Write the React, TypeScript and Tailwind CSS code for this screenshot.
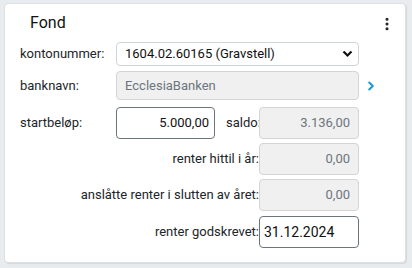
import { ChevronRight, EllipsisVertical } from "lucide-react"

const font = { fontFamily: "Roboto, 'Liberation Sans', sans-serif" }

function ReadOnly({ value, className = "" }: { value: string; className?: string }) {
  return (
    <div
      className={`flex items-center justify-end rounded-[4px] border border-[#d4d4d4] bg-[#f0f0f0] px-2 text-[13px] text-[#6c757d] ${className}`}
    >
      {value}
    </div>
  )
}

export default function App() {
  return (
    <div className="h-[268px] w-[412px] bg-[#e9ecef] pl-[4px] pt-[3px]" style={font}>
      <div className="relative h-[260px] w-[402px] rounded-[4px] border border-[#dcdfe3] bg-white shadow-[1px_1px_1px_rgba(0,0,0,0.08)]">
        <div className="flex h-[36px] items-center pl-[25px] pt-[2px] text-[16px] text-[#111]">Fond</div>
        <EllipsisVertical className="absolute right-[10px] top-[12px] h-[16px] w-[16px] text-[#222]" strokeWidth={2.6} />

        <div className="flex flex-col pl-[15px] text-[13px] text-[#212529]">
          <div className="mt-[2px] flex items-center">
            <span className="w-[96px]">kontonummer:</span>
            <div className="flex h-[24px] w-[243px] items-center justify-between rounded-[4px] border border-[#ced4da] pl-[8px] pr-[5px] text-[13px] text-[#111]">
              <span>1604.02.60165 (Gravstell)</span>
              <svg width="11" height="8" viewBox="0 0 11 8" fill="none">
                <path d="M1.5 1.5 L5.5 5.5 L9.5 1.5" stroke="#111" strokeWidth="2.2" />
              </svg>
            </div>
          </div>

          <div className="mt-[5px] flex items-center">
            <span className="w-[96px]">banknavn:</span>
            <div className="flex h-[29px] w-[243px] items-center rounded-[4px] border border-[#d4d4d4] bg-[#f0f0f0] px-[8px] text-[#6c757d]">
              EcclesiaBanken
            </div>
            <ChevronRight className="ml-[5px] h-[14px] w-[14px] text-[#1a9ad6]" strokeWidth={3.5} />
          </div>

          <div className="mt-[7px] flex items-center">
            <span className="w-[96px]">startbeløp:</span>
            <div className="flex h-[32px] w-[99px] items-center justify-end rounded-[4px] border border-[#6c757d] px-[5px] text-[#111]">
              5.000,00
            </div>
            <span className="ml-[11px] w-[33px]">saldo:</span>
            <ReadOnly value="3.136,00" className="h-[32px] w-[100px]" />
          </div>

          <div className="mt-[4px] flex items-center">
            <span className="w-[239px] text-right">renter hittil i år:</span>
            <ReadOnly value="0,00" className="h-[32px] w-[100px]" />
          </div>

          <div className="mt-[4px] flex items-center">
            <span className="w-[239px] text-right">anslåtte renter i slutten av året:</span>
            <ReadOnly value="0,00" className="h-[32px] w-[100px]" />
          </div>

          <div className="mt-[5px] flex items-center">
            <span className="w-[239px] text-right">renter godskrevet:</span>
            <div className="flex h-[32px] w-[100px] items-center rounded-[4px] border border-[#6c757d] px-[4px] text-[14px] text-[#111]">
              31.12.2024
            </div>
          </div>
        </div>
      </div>
    </div>
  )
}
